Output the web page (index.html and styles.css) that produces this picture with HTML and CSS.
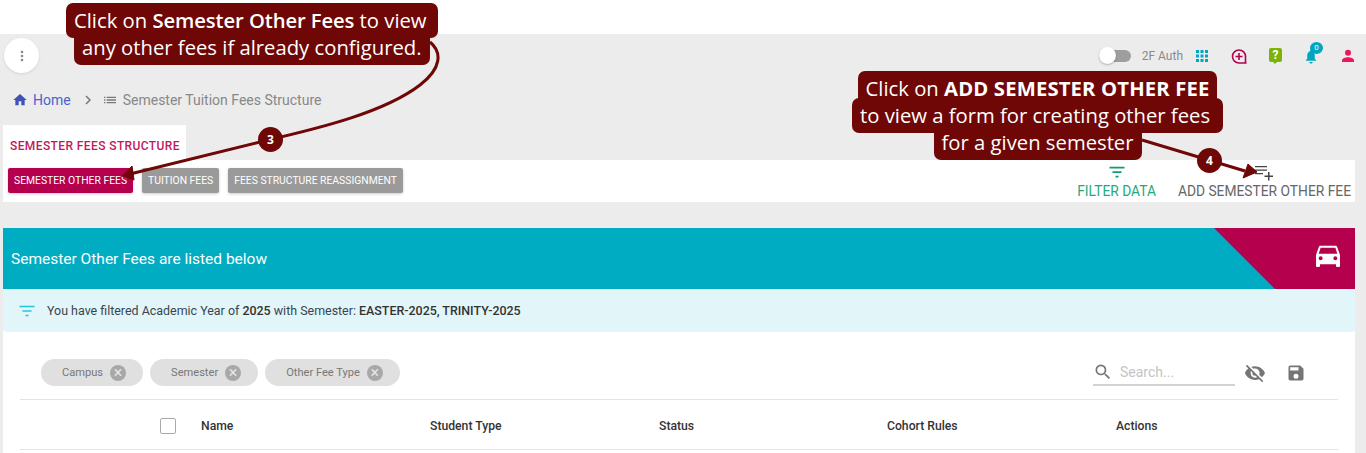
FILE: index.html
```html
<!DOCTYPE html>
<html lang="en">
<head>
    <meta charset="UTF-8">
    <title>Semester Tuition Fees Structure</title>
    <link rel="stylesheet" href="styles.css">
</head>
<body>
    <div class="app">
        <div class="topbar">
            <button class="menu-btn">
                <svg width="14" height="14" viewBox="0 0 14 14"><circle cx="7" cy="3" r="1.3"/><circle cx="7" cy="7" r="1.3"/><circle cx="7" cy="11" r="1.3"/></svg>
            </button>
            <div class="top-right">
                <span class="toggle"><span class="knob"></span></span>
                <span class="auth">2F Auth</span>
                <svg class="top-icon" width="14" height="14" viewBox="0 0 14 14" fill="#00a6bf"><rect x="1" y="1" width="3" height="3"/><rect x="5.5" y="1" width="3" height="3"/><rect x="10" y="1" width="3" height="3"/><rect x="1" y="5.5" width="3" height="3"/><rect x="5.5" y="5.5" width="3" height="3"/><rect x="10" y="5.5" width="3" height="3"/><rect x="1" y="10" width="3" height="3"/><rect x="5.5" y="10" width="3" height="3"/><rect x="10" y="10" width="3" height="3"/></svg>
                <svg class="top-icon plus-icon" width="16" height="16" viewBox="0 0 16 16" fill="none" stroke="#b5004e" stroke-width="1.6"><path d="M15 15H8A6.500 6.500 0 1 1 14.500 8.500V15Z" stroke-linejoin="round"/><path d="M8 5v7M4.500 8.500h7"/></svg>
                <span class="help">?</span>
                <span class="bell">
                    <svg width="14" height="15" viewBox="0 0 16 18" fill="#00a6bf"><path d="M8 1a1 1 0 0 1 1 1v.6c2.300.6 3.500 2.600 3.500 5v4l1.500 1.600v.8H2v-.8l1.500-1.600v-4c0-2.400 1.200-4.400 3.500-5V2a1 1 0 0 1 1-1zM6 15.500h4a2 2 0 0 1-4 0z"/></svg>
                    <span class="badge">0</span>
                </span>
                <svg class="top-icon user" width="14" height="14" viewBox="0 0 14 14" fill="#e9175f"><circle cx="7" cy="3.800" r="3"/><path d="M1 13v-1.500C1 9.300 4.500 8.300 7 8.300s6 1 6 3.200V13z"/></svg>
            </div>
        </div>

        <div class="crumbs">
            <svg width="16" height="16" viewBox="0 0 24 24" fill="#3f51b5"><path d="M10 20v-6h4v6h5v-8h3L12 3 2 12h3v8z"/></svg>
            <span class="crumb-home">Home</span>
            <svg class="crumb-sep" width="12" height="12" viewBox="0 0 12 12" fill="none" stroke="#777" stroke-width="1.500"><path d="M4 2l4 4-4 4"/></svg>
            <svg width="16" height="16" viewBox="0 0 24 24" fill="#777"><path d="M3 13h2v-2H3zm0 4h2v-2H3zm0-8h2V7H3zm4 4h14v-2H7zm0 4h14v-2H7zM7 7v2h14V7z"/></svg>
            <span class="crumb-page">Semester Tuition Fees Structure</span>
        </div>

        <div class="tab">SEMESTER FEES STRUCTURE</div>
        <div class="toolbar">
            <button class="btn btn-active">SEMESTER OTHER FEES</button>
            <button class="btn">TUITION FEES</button>
            <button class="btn">FEES STRUCTURE REASSIGNMENT</button>
            <div class="tool filter-tool">
                <svg width="18" height="18" viewBox="0 0 24 24" fill="#0e9d6c"><path d="M2 5h20v2.200H2zM6 11h12v2.200H6zM10 17h4v2.200h-4z"/></svg>
                <span>FILTER DATA</span>
            </div>
            <div class="tool add-tool">
                <svg width="20" height="18" viewBox="0 0 20 18" fill="#444"><path d="M1 3h12v1.300H1zM1 6.500h12v1.300H1zM1 10h8v1.300H1zM14 9h1.500v3.500H19V14h-3.500v3.500H14V14h-3.500v-1.500H14z"/></svg>
                <span>ADD SEMESTER OTHER FEE</span>
            </div>
        </div>

        <div class="card">
            <div class="card-head">
                <span class="card-title">Semester Other Fees are listed below</span>
                <div class="card-corner">
                    <svg width="32" height="32" viewBox="0 0 24 24" fill="#fff"><path d="M18.900 6c-.2-.6-.8-1-1.400-1h-11c-.7 0-1.200.4-1.400 1L3 12v8c0 .6.400 1 1 1h1c.6 0 1-.4 1-1v-1h12v1c0 .6.400 1 1 1h1c.6 0 1-.4 1-1v-8zM6.500 16a1.500 1.500 0 1 1 0-3 1.500 1.500 0 0 1 0 3zm11 0a1.500 1.500 0 1 1 0-3 1.500 1.500 0 0 1 0 3zM5 11l1.500-4.500h11L19 11z"/></svg>
                </div>
            </div>
            <div class="notice">
                <svg width="18" height="18" viewBox="0 0 24 24" fill="#26c6da"><path d="M2 5h20v2H2zM6 11h12v2H6zM10 17h4v2h-4z"/></svg>
                <span>You have filtered Academic Year of <b>2025</b> with Semester: <b>EASTER-2025, TRINITY-2025</b></span>
            </div>
            <div class="card-body">
                <div class="filter-row">
                    <span class="chip">Campus <i class="chip-x">&times;</i></span>
                    <span class="chip">Semester <i class="chip-x">&times;</i></span>
                    <span class="chip">Other Fee Type <i class="chip-x">&times;</i></span>
                    <div class="search">
                        <svg width="20" height="20" viewBox="0 0 24 24" fill="#757575"><path d="M15.500 14h-.79l-.28-.27A6.470 6.470 0 0 0 16 9.500 6.500 6.500 0 1 0 9.500 16c1.610 0 3.090-.59 4.230-1.570l.27.28v.79l5 4.990L20.490 19l-4.990-5zm-6 0C7.010 14 5 11.990 5 9.500S7.010 5 9.500 5 14 7.010 14 9.500 11.990 14 9.500 14z"/></svg>
                        <span>Search...</span>
                    </div>
                    <svg class="row-icon" width="22" height="22" viewBox="0 0 24 24" fill="#757575"><path d="M12 7a5 5 0 0 1 5 5c0 .6-.1 1.300-.4 1.800l2.900 2.900c1.500-1.300 2.700-2.900 3.400-4.700-1.700-4.400-6-7.500-11-7.500-1.400 0-2.700.3-4 .7l2.200 2.200c.6-.3 1.200-.4 1.900-.4zM2 4.300l2.700 2.700C3 8.300 1.700 10 1 12c1.700 4.400 6 7.500 11 7.500 1.500 0 3-.3 4.400-.8l.4.400 2.900 2.900 1.300-1.300L3.300 3zM7.500 9.800l1.600 1.500v.7a3 3 0 0 0 3 3h.7l1.500 1.600c-.7.300-1.400.5-2.200.5a5 5 0 0 1-4.600-6.900z"/></svg>
                    <svg class="row-icon save-icon" width="20" height="20" viewBox="0 0 24 24" fill="#757575"><path d="M17 3H5a2 2 0 0 0-2 2v14c0 1.100.9 2 2 2h14a2 2 0 0 0 2-2V7zm-5 16a3 3 0 1 1 0-6 3 3 0 0 1 0 6zm3-10H5V5h10z"/></svg>
                </div>
                <div class="table-head">
                    <span class="check"></span>
                    <span class="col col-name">Name</span>
                    <span class="col col-type">Student Type</span>
                    <span class="col col-status">Status</span>
                    <span class="col col-rules">Cohort Rules</span>
                    <span class="col">Actions</span>
                </div>
            </div>
        </div>
    </div>

    <!-- tutorial annotations over the screenshot -->
    <svg class="arrows" width="1366" height="453" viewBox="0 0 1366 453" fill="none" stroke="#6f0706" stroke-width="3">
        <path d="M430 42C442 52 442 68 420 85C385 112 320 128 268 140L130 174"/>
        <path d="M122 176L132 166L134 180Z" fill="#6f0706" stroke-width="1"/>
        <path d="M1142 140L1245 171"/>
        <path d="M1257 172L1248 164L1243 178Z" fill="#6f0706" stroke-width="1"/>
    </svg>
    <span class="step step-3">3</span>
    <span class="step step-4">4</span>
    <div class="callout callout-left">
        <span class="line-wide">Click on <b>Semester Other Fees</b> to view</span>
        <span>any other fees if already configured.</span>
    </div>
    <div class="callout callout-right">
        <span>Click on <b>ADD SEMESTER OTHER FEE</b></span>
        <span class="line-wide">to view a form for creating other fees</span>
        <span>for a given semester</span>
    </div>
</body>
</html>
```

FILE: styles.css
```css
* {
    box-sizing: border-box;
}
html, body {
    margin: 0;
    height: 453px;
    overflow: hidden;
}
body {
    font-family: Roboto, sans-serif;
    background-color: #fff;
    position: relative;
}
.app {
    margin-top: 34px;
    height: 419px;
    background-color: #ececec;
    padding: 4px 11px 0 3px;
    overflow: hidden;
}
.topbar {
    display: flex;
    align-items: center;
    height: 35px;
    padding-left: 1px;
}
.menu-btn {
    width: 35px;
    height: 35px;
    border: 0;
    border-radius: 50%;
    background-color: #fff;
    box-shadow: 0 1px 3px rgba(0, 0, 0, 0.1);
    display: flex;
    align-items: center;
    justify-content: center;
    padding: 0;
}
.menu-btn svg {
    fill: #888;
}
.top-right {
    margin-left: auto;
    display: flex;
    align-items: center;
    padding-top: 1px;
}
.toggle {
    width: 32px;
    height: 12px;
    border-radius: 6px;
    background-color: #9e9e9e;
    position: relative;
    margin-right: 11px;
}
.knob {
    position: absolute;
    left: 0;
    top: -3px;
    width: 17px;
    height: 17px;
    border-radius: 50%;
    background-color: #fff;
    box-shadow: 0 1px 2px rgba(0, 0, 0, 0.25);
}
.auth {
    font-size: 12px;
    color: #8a8a8a;
    margin-right: 12px;
}
.top-icon {
    display: block;
}
.plus-icon {
    margin-left: 22px;
}
.help {
    position: relative;
    width: 13px;
    height: 14px;
    margin-left: 22px;
    margin-top: -2px;
    background-color: #7cb305;
    border-radius: 2px;
    color: #fff;
    font-size: 12px;
    font-weight: 700;
    line-height: 14px;
    text-align: center;
}
.help::after {
    content: "";
    position: absolute;
    left: 4px;
    top: 14px;
    border-style: solid;
    border-width: 2px 2.500px 0;
    border-color: #7cb305 transparent transparent;
}
.bell {
    position: relative;
    margin-left: 22px;
    display: block;
    height: 15px;
    width: 14px;
}
.badge {
    position: absolute;
    left: 6px;
    top: -7px;
    width: 13px;
    height: 12px;
    border-radius: 50%;
    background-color: #00a6bf;
    color: #fff;
    font-size: 8px;
    line-height: 12px;
    text-align: center;
}
.top-icon.user {
    margin-left: 23px;
}
.crumbs {
    display: flex;
    align-items: center;
    height: 20px;
    margin-top: 17px;
    padding-left: 9px;
    font-size: 14px;
}
.crumb-home {
    color: #4a63c9;
    margin-left: 5px;
}
.crumb-sep {
    margin: 0 8px 0 11px;
}
.crumb-page {
    color: #888;
    margin-left: 5px;
}
.tab {
    width: 183px;
    height: 35px;
    margin-top: 15px;
    background-color: #fff;
    color: #c2185b;
    font-size: 12px;
    font-weight: 500;
    letter-spacing: 0.4px;
    padding: 14px 0 0 7px;
    white-space: nowrap;
}
.toolbar {
    display: flex;
    align-items: flex-start;
    height: 42px;
    background-color: #fff;
    padding: 8px 4px 0 5px;
}
.btn {
    height: 25px;
    border: 0;
    border-radius: 2px;
    background-color: #9a9a9a;
    color: #fff;
    font-family: Roboto, sans-serif;
    font-size: 10.350px;
    padding: 0 6px;
    margin-right: 9px;
    white-space: nowrap;
    box-shadow: 0 1px 3px rgba(0, 0, 0, 0.2);
}
.btn-active {
    background-color: #b5004e;
}
.tool {
    display: flex;
    flex-direction: column;
    align-items: center;
    font-size: 13.800px;
    white-space: nowrap;
    margin-top: -5px;
}
.tool svg {
    display: block;
    margin-bottom: 3px;
}
.tool span {
    line-height: 14px;
}
.filter-tool {
    margin-left: auto;
    color: #1faa7b;
}
.add-tool {
    margin-left: 22px;
    color: #666;
}
.card {
    margin-top: 26px;
    height: 240px;
    background-color: #fff;
}
.card-head {
    position: relative;
    height: 61px;
    background-color: #00acc1;
    display: flex;
    align-items: center;
    padding: 1px 0 0 8px;
    overflow: hidden;
}
.card-title {
    color: #fff;
    font-size: 15.500px;
}
.card-corner {
    position: absolute;
    right: 0;
    top: 0;
    width: 141px;
    height: 61px;
    background-color: #b5004e;
    clip-path: polygon(0 0, 100% 0, 100% 100%, 61px 100%);
    display: flex;
    align-items: flex-start;
    justify-content: flex-end;
    padding: 11px 11px 0 0;
}
.notice {
    height: 43px;
    background-color: #e2f5f9;
    display: flex;
    align-items: center;
    padding-left: 15px;
    font-size: 12.450px;
    color: #37474f;
    border-radius: 0 0 3px 3px;
}
.notice svg {
    margin-right: 11px;
}
.notice b {
    font-weight: 500;
    color: #333;
}
.card-body {
    padding: 0 17px;
}
.filter-row {
    display: flex;
    align-items: center;
    height: 68px;
    border-bottom: 1px solid #e4e4e4;
    padding: 14px 32px 0 21px;
}
.chip {
    display: flex;
    align-items: center;
    height: 27px;
    border-radius: 14px;
    background-color: #e0e0e0;
    color: #777;
    font-size: 11.100px;
    padding: 0 17px 0 21px;
    margin-right: 7px;
    white-space: nowrap;
}
.chip-x {
    width: 16px;
    height: 16px;
    margin-left: 7px;
    border-radius: 50%;
    background-color: #a8a8a8;
    color: #e6e6e6;
    font-style: normal;
    font-size: 16px;
    line-height: 15px;
    text-align: center;
}
.search {
    display: flex;
    align-items: center;
    width: 142px;
    height: 27px;
    margin-left: auto;
    border-bottom: 2px solid #d2d2d2;
    color: #c4c4c4;
    font-size: 14px;
}
.search span {
    margin-left: 7px;
}
.row-icon {
    margin-left: 9px;
}
.save-icon {
    margin-left: 20px;
}
.table-head {
    display: flex;
    align-items: center;
    height: 50px;
    border-bottom: 1px solid #e4e4e4;
    padding: 2px 0 0 140px;
    font-size: 12.200px;
    color: #333;
    font-weight: 500;
}
.check {
    width: 16px;
    height: 16px;
    border: 1.500px solid #aaa;
    border-radius: 2px;
    margin-right: 25px;
}
.col-name, .col-type, .col-rules {
    width: 229px;
}
.col-status {
    width: 228px;
}
.arrows {
    position: absolute;
    left: 0;
    top: 0;
}
.step {
    position: absolute;
    width: 25px;
    height: 25px;
    border-radius: 50%;
    background-color: #6f0706;
    color: #fff;
    font-family: "Open Sans", sans-serif;
    font-size: 12px;
    font-weight: 700;
    line-height: 25px;
    text-align: center;
}
.step-3 {
    left: 258px;
    top: 127px;
}
.step-4 {
    left: 1197px;
    top: 148px;
}
.callout {
    position: absolute;
    isolation: isolate;
    display: flex;
    flex-direction: column;
    align-items: center;
    font-family: "Open Sans", sans-serif;
    font-size: 20.250px;
    line-height: 27px;
    color: #fff;
    white-space: nowrap;
}
.callout span {
    position: relative;
    display: block;
    padding: 0 8px;
}
/* the dark boxes sit under all the lines so they never cut a descender */
.callout span::before {
    content: "";
    position: absolute;
    z-index: -1;
    left: 0;
    right: 0;
    top: -4px;
    bottom: -4px;
    background-color: #6f0706;
    border-radius: 7px;
}
.callout-left .line-wide {
    padding-right: 11px;
}
.callout-right .line-wide {
    padding-right: 13px;
}
.callout-left b {
    font-weight: 600;
    letter-spacing: -0.1px;
}
.callout-right b {
    font-weight: 700;
    letter-spacing: 0.15px;
}
.callout-left {
    left: 66px;
    top: 7px;
}
.callout-right {
    left: 852px;
    top: 75px;
}
```
